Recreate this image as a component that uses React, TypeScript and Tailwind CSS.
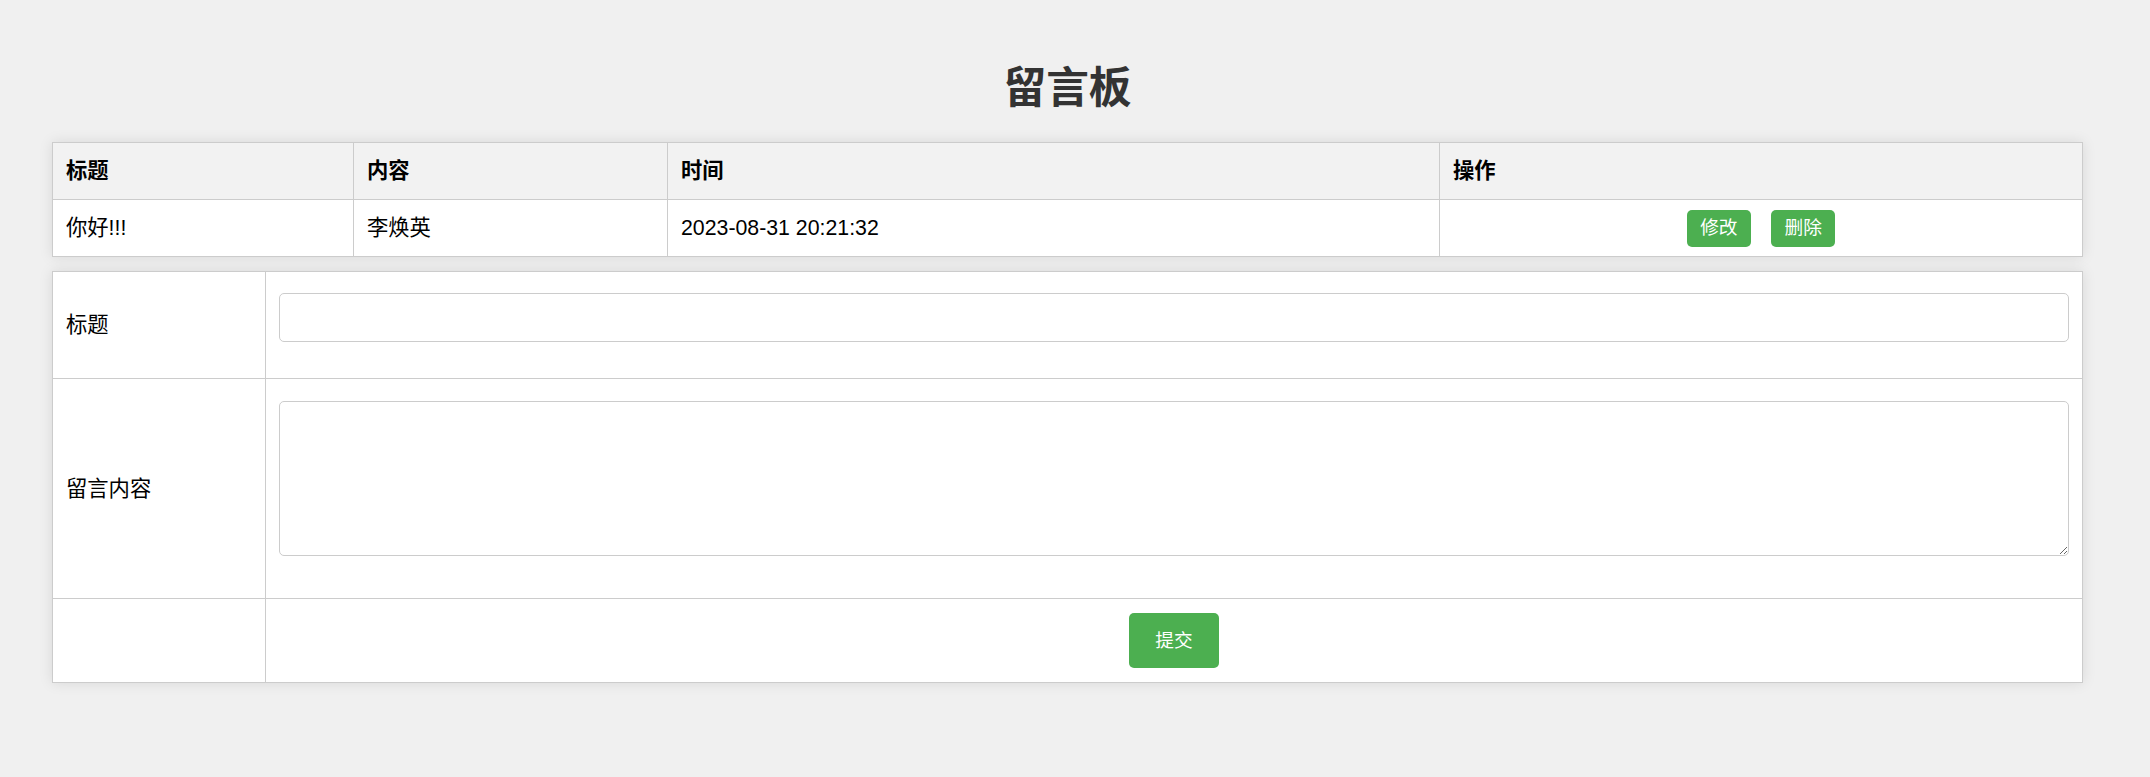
import { useState } from 'react';

interface Message {
  id: number;
  title: string;
  content: string;
  time: string;
}

const initialMessages: Message[] = [
  { id: 1, title: '你好!!!', content: '李焕英', time: '2023-08-31 20:21:32' },
];

const App = () => {
  const [messages] = useState<Message[]>(initialMessages);
  const [title, setTitle] = useState('');
  const [content, setContent] = useState('');

  return (
    <div className="min-h-screen bg-[#f0f0f0] font-['Liberation_Sans','Noto_Sans_CJK_SC',sans-serif] text-black">
      <div className="w-[2135px] pt-[64px]">
        {/* Header */}
        <h1 className="text-center text-[42.7px] leading-[48px] font-bold text-[#333]">留言板</h1>

        <div className="mx-auto mt-[30px] w-[2031px]">
          {/* Message list */}
          <table className="w-full table-fixed border-collapse border border-[#ccc] bg-white text-[21.3px] shadow-[0_0_13px_rgba(0,0,0,0.1)]">
            <colgroup>
              <col className="w-[301px]" />
              <col className="w-[314px]" />
              <col className="w-[772px]" />
              <col />
            </colgroup>
            <thead>
              <tr className="bg-[#f2f2f2]">
                {['标题', '内容', '时间', '操作'].map((h) => (
                  <th key={h} className="border border-[#ccc] px-[13px] py-[16px] text-left align-middle font-bold leading-[24px]">
                    {h}
                  </th>
                ))}
              </tr>
            </thead>
            <tbody>
              {messages.map((m) => (
                <tr key={m.id}>
                  <td className="border border-[#ccc] px-[13px] py-[16px] align-middle leading-[24px]">{m.title}</td>
                  <td className="border border-[#ccc] px-[13px] py-[16px] align-middle leading-[24px]">{m.content}</td>
                  <td className="border border-[#ccc] px-[13px] py-[16px] align-middle leading-[24px]">{m.time}</td>
                  <td className="border border-[#ccc] px-[13px] py-[9px] align-middle">
                    <div className="flex justify-center gap-[20px]">
                      <button className="h-[37px] rounded-[5px] bg-[#4caf50] px-[13.5px] text-[18.7px] leading-[24px] text-white">修改</button>
                      <button className="h-[37px] rounded-[5px] bg-[#4caf50] px-[13.5px] text-[18.7px] leading-[24px] text-white">删除</button>
                    </div>
                  </td>
                </tr>
              ))}
            </tbody>
          </table>

          {/* Message form */}
          <table className="mt-[14px] w-full table-fixed border-collapse border border-[#ccc] bg-white text-[21.3px] shadow-[0_0_13px_rgba(0,0,0,0.1)]">
            <colgroup>
              <col className="w-[213px]" />
              <col />
            </colgroup>
            <tbody>
              <tr>
                <td className="border border-[#ccc] px-[13px] align-middle leading-[24px]">标题</td>
                <td className="border border-[#ccc] px-[13px] pt-[21px] pb-[36px]">
                  <input
                    type="text"
                    value={title}
                    onChange={(e) => setTitle(e.target.value)}
                    className="block h-[49px] w-full rounded-[5px] border border-[#ccc] bg-white px-[10px] outline-none"
                  />
                </td>
              </tr>
              <tr>
                <td className="border border-[#ccc] px-[13px] align-middle leading-[24px]">留言内容</td>
                <td className="border border-[#ccc] px-[13px] pt-[22px] pb-[42px]">
                  <textarea
                    value={content}
                    onChange={(e) => setContent(e.target.value)}
                    className="block h-[155px] w-full rounded-[5px] border border-[#ccc] bg-white px-[10px] outline-none"
                  />
                </td>
              </tr>
              <tr>
                <td className="border border-[#ccc]"></td>
                <td className="border border-[#ccc] px-[13px] pt-[14px] pb-[14px]">
                  <button className="ml-[850px] block h-[55px] w-[90px] rounded-[5px] bg-[#4caf50] text-[18.7px] leading-[24px] text-white">
                    提交
                  </button>
                </td>
              </tr>
            </tbody>
          </table>
        </div>
      </div>
    </div>
  );
};

export default App;
